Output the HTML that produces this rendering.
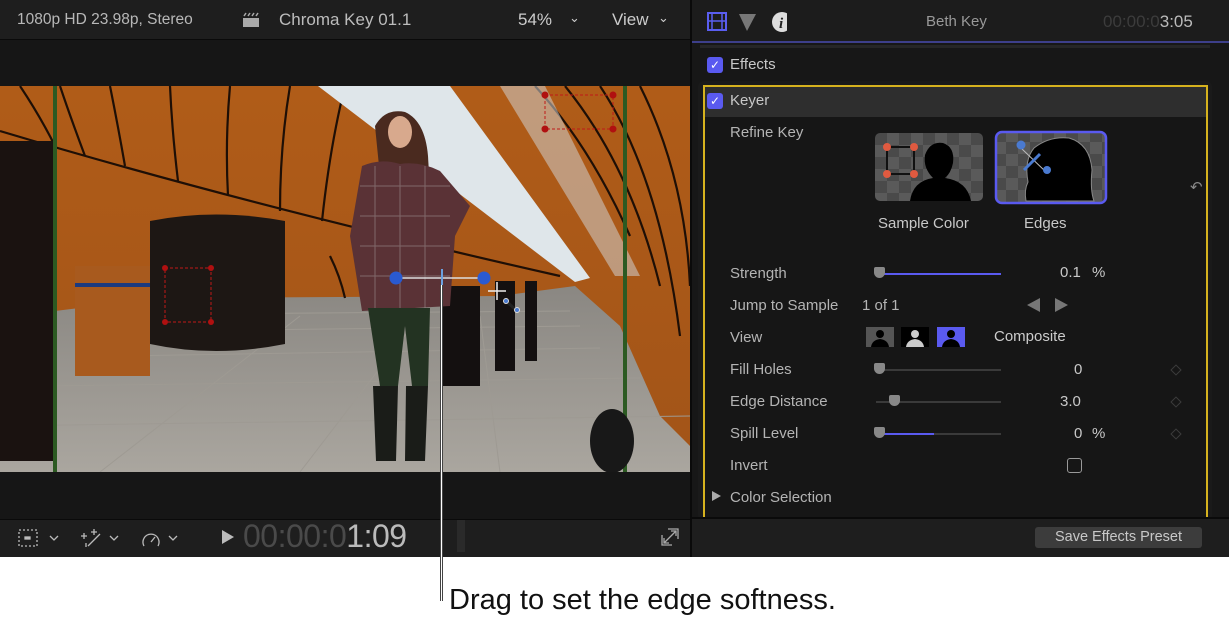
<!DOCTYPE html>
<html><head><meta charset="utf-8"><style>
*{margin:0;padding:0;box-sizing:border-box}
body{width:1229px;height:622px;background:#fff;position:relative;overflow:hidden;font-family:"Liberation Sans",sans-serif}
.a{position:absolute}
.t{position:absolute;color:#c8c8c8;font-size:15px;white-space:nowrap}
.lbl{position:absolute;left:730px;color:#b4b4b4;font-size:15px}
.trk{position:absolute;height:2px;background:#3a3a3a}
.knob{position:absolute;width:11px;height:11px;background:#888;border-radius:2px 2px 6px 6px}
.dia{position:absolute;width:8px;height:8px;border:1px solid #3c3c3c;transform:rotate(45deg)}
</style></head><body>
<div class="a" style="left:0;top:0;width:690px;height:557px;background:#161616"></div>
<div class="a" style="left:0;top:0;width:690px;height:40px;background:#1e1e1e;border-bottom:1px solid #0a0a0a"></div>
<div class="t" style="left:17px;top:11px;font-size:15.5px;color:#b8b8b8">1080p HD 23.98p, Stereo</div>
<svg class="a" style="left:242px;top:12px" width="18" height="16"><rect x="1" y="6" width="16" height="9" fill="#aaa"/><path d="M2 4l2-3M6 4l2-3M10 4l2-3M14 4l2-3" stroke="#aaa" stroke-width="1.5"/></svg>
<div class="t" style="left:279px;top:10px;font-size:17px;color:#bcbcbc">Chroma Key 01.1</div>
<div class="t" style="left:518px;top:10px;font-size:17px;color:#ccc">54%</div>
<div class="t" style="left:569px;top:10px;font-size:13px;color:#ccc">⌄</div>
<div class="t" style="left:612px;top:10px;font-size:17px;color:#ccc">View</div>
<div class="t" style="left:658px;top:10px;font-size:13px;color:#ccc">⌄</div>
<svg class="a" style="left:0;top:86px" width="690" height="386" viewBox="0 0 690 386">
<defs>
<linearGradient id="ceil" x1="0" y1="0" x2="0" y2="1"><stop offset="0" stop-color="#b05c18"/><stop offset="1" stop-color="#a25418"/></linearGradient>
<linearGradient id="floor" x1="0" y1="0" x2="0" y2="1"><stop offset="0" stop-color="#8a8782"/><stop offset="1" stop-color="#aaa69f"/></linearGradient>
</defs>
<rect width="690" height="386" fill="url(#ceil)"/>
<polygon points="0,300 55,225 160,212 500,210 575,200 620,240 660,330 690,360 690,386 0,386" fill="url(#floor)"/>
<g stroke="#9e9a93" stroke-width="1" fill="none"><path d="M0 340L690 330M40 300L640 292M120 270L600 262M160 245L580 240M200 228L570 225M100 386L300 230M300 386L420 230M500 386L480 230"/></g>
<g stroke="#1e0f06" stroke-width="2.2" fill="none">
<path d="M0 45Q250 120 560 190"/>
<path d="M20 0Q40 30 55 60M60 0Q70 30 85 70M110 0Q118 40 125 80M170 0Q172 45 178 95M230 0Q225 55 228 110M290 0Q280 60 280 125M345 0Q330 60 322 135"/>
<path d="M535 0Q590 60 630 150M565 0Q630 80 660 200M600 0Q660 90 680 250M640 0Q685 90 690 200"/>
<path d="M160 150Q180 170 190 210M210 165Q225 185 230 212M330 170Q340 190 345 212"/>
</g>
<polygon points="318,0 450,0 590,192 575,196" fill="#dfe6ea"/>
<polygon points="500,0 545,0 640,190 615,190" fill="#cfcfcf" opacity=".55"/>
<rect x="0" y="55" width="55" height="320" fill="#1a1210"/>
<path d="M150 135Q215 122 285 135L285 258Q215 272 150 258Z" fill="#1d1714"/>
<rect x="75" y="180" width="75" height="110" fill="#a85a1e"/>
<rect x="75" y="197" width="75" height="4" fill="#1a3a80"/>
<g fill="#141010"><rect x="440" y="200" width="40" height="100"/><rect x="495" y="195" width="20" height="90"/><rect x="525" y="195" width="12" height="80"/></g>
<path d="M55 0L55 386M625 0L625 386" stroke="#2c5a22" stroke-width="4"/>
<ellipse cx="612" cy="355" rx="22" ry="32" fill="#181818"/>
<path d="M375 40Q385 22 405 26Q425 35 428 70L432 140L412 160L388 150L380 90Z" fill="#4a2a1f"/>
<ellipse cx="400" cy="46" rx="12" ry="16" fill="#d8a98d"/>
<path d="M362 80Q380 72 400 78Q420 75 440 85L470 120L455 150L450 220L362 225L350 150Z" fill="#5a3236"/>
<g stroke="#9a8c8c" stroke-width="1" opacity=".6"><path d="M360 100H450M360 130H450M360 160H450M360 190H450M375 80V225M400 80V225M425 80V225"/></g>
<path d="M368 222H430L428 300L412 300L405 240L398 300L380 300Z" fill="#233322"/>
<path d="M373 300H398L396 375H376ZM406 300H428L425 375H405Z" fill="#1a1c18"/>
<g stroke="#c01818" stroke-dasharray="3 2" fill="none"><rect x="165" y="182" width="46" height="54"/><rect x="545" y="9" width="68" height="34"/></g>
<g fill="#b01010"><circle cx="165" cy="182" r="3"/><circle cx="211" cy="182" r="3"/><circle cx="165" cy="236" r="3"/><circle cx="211" cy="236" r="3"/><circle cx="545" cy="9" r="3.5"/><circle cx="613" cy="9" r="3.5"/><circle cx="545" cy="43" r="3.5"/><circle cx="613" cy="43" r="3.5"/></g>
<line x1="396" y1="192" x2="484" y2="192" stroke="#ddd" stroke-width="1.5"/>
<circle cx="396" cy="192" r="6.5" fill="#2a5ad0"/><circle cx="484" cy="192" r="6.5" fill="#2a5ad0"/>
<rect x="441" y="183" width="2" height="20" fill="#6aa0e0"/>
<path d="M497 196V214M488 205H506" stroke="#eee" stroke-width="1.5"/>
<path d="M506 215L516 224" stroke="#222" stroke-width="3"/><circle cx="506" cy="215" r="2.5" fill="#4a7ad0" stroke="#ddd"/><circle cx="517" cy="224" r="2.5" fill="#4a7ad0" stroke="#ddd"/>
</svg>
<div class="a" style="left:0;top:519px;width:690px;height:38px;background:#1e1e1e;border-top:1px solid #0a0a0a"></div>
<svg class="a" style="left:18px;top:527px" width="170" height="22" fill="none" stroke="#bbb" stroke-width="1.3">
<rect x="1" y="3" width="18" height="16" stroke-dasharray="2 2"/><rect x="7" y="10" width="5" height="2" fill="#bbb"/><path d="M32 9l4 4 4-4"/>
<path d="M70 19L82 7M66 6v6M63 9h6M76 2v6M73 5h6M68 16v4"/><path d="M92 9l4 4 4-4"/>
<path d="M126 19a8 8 0 1 1 14 0M133 15l4-5"/><path d="M151 9l4 4 4-4"/></svg>
<div class="a" style="left:222px;top:530px;width:0;height:0;border-left:12px solid #bbb;border-top:7px solid transparent;border-bottom:7px solid transparent"></div>
<div class="t" style="left:243px;top:518px;font-size:32px;color:#4a4a4a;letter-spacing:-0.5px">00:00:0<span style="color:#bbb">1:09</span></div>
<div class="a" style="left:457px;top:520px;width:8px;height:32px;background:#2a2a2a"></div>
<svg class="a" style="left:660px;top:527px" width="20" height="20" fill="none" stroke="#aaa" stroke-width="1.3"><path d="M2 8V18H12M8 2H18V12M4 16L16 4M11 4H16V9M4 11V16H9"/></svg>
<div class="a" style="left:440px;top:285px;width:3px;height:316px;background:#fff;border-left:1px solid #444;border-right:1px solid #444"></div>
<div class="t" style="left:449px;top:584px;font-size:29px;color:#111">Drag to set the edge softness.</div>
<div class="a" style="left:690px;top:0;width:2px;height:557px;background:#0a0a0a"></div>
<div class="a" style="left:692px;top:0;width:537px;height:557px;background:#171717"></div>
<div class="a" style="left:692px;top:0;width:537px;height:42px;background:#1c1c1c"></div>
<div class="a" style="left:692px;top:41px;width:537px;height:2px;background:#3d3f8a"></div>
<div class="a" style="left:700px;top:45px;width:510px;height:3px;background:#262626"></div>
<svg class="a" style="left:707px;top:11px" width="80" height="22"><rect x="1" y="2" width="18" height="17" fill="none" stroke="#5a5ef0" stroke-width="2"/><path d="M5 2v17M15 2v17M1 10h18" stroke="#5a5ef0" stroke-width="1.5"/><polygon points="32,3 49,3 40,20" fill="#777"/><circle cx="75" cy="11" r="10" fill="#ddd"/><text x="72" y="17" font-size="15" font-style="italic" font-weight="bold" fill="#222" font-family="Liberation Serif">i</text></svg>
<div class="t" style="left:926px;top:13px;font-size:15px;color:#999">Beth Key</div>
<div class="t" style="left:1103px;top:12px;font-size:17px;color:#3c3c3c">00:00:0<span style="color:#bbb">3:05</span></div>
<div class="a" style="left:707px;top:57px;width:16px;height:16px;background:#5a5af0;border-radius:3px;color:#fff;font-size:12px;text-align:center;line-height:16px">✓</div>
<div class="t" style="left:730px;top:56px;color:#c8c8c8">Effects</div>
<div class="a" style="left:698px;top:81px;width:514px;height:440px;background:#1a1a1a;border-radius:6px"></div>
<div class="a" style="left:703px;top:85px;width:505px;height:436px;border:2px solid #d6b21e;border-bottom:none;background:#161616"></div>
<div class="a" style="left:705px;top:87px;width:501px;height:30px;background:#2e2e2e"></div>
<div class="a" style="left:707px;top:93px;width:16px;height:16px;background:#5a5af0;border-radius:3px;color:#fff;font-size:12px;text-align:center;line-height:16px">✓</div>
<div class="t" style="left:730px;top:92px;color:#c8c8c8">Keyer</div>
<div class="lbl" style="top:124px">Refine Key</div>
<svg class="a" style="left:875px;top:133px" width="110" height="70"><defs><pattern id="ck" width="24" height="24" patternUnits="userSpaceOnUse"><rect width="24" height="24" fill="#5a5a5a"/><rect width="12" height="12" fill="#4a4a4a"/><rect x="12" y="12" width="12" height="12" fill="#4a4a4a"/></pattern></defs><rect width="108" height="68" rx="5" fill="url(#ck)"/><path d="M35 68Q38 48 58 45Q48 35 50 22Q55 8 68 10Q80 14 78 30Q76 40 70 45Q92 48 96 68Z" fill="#000"/><rect x="12" y="14" width="27" height="27" fill="none" stroke="#111" stroke-width="2"/><g fill="#e05a40"><circle cx="12" cy="14" r="4"/><circle cx="39" cy="14" r="4"/><circle cx="12" cy="41" r="4"/><circle cx="39" cy="41" r="4"/></g></svg>
<svg class="a" style="left:994px;top:130px" width="116" height="76"><rect x="2" y="2" width="110" height="71" rx="6" fill="url(#ck)" stroke="#5a5af0" stroke-width="2.5"/><path d="M32 71Q30 60 34 52Q30 30 40 18Q55 6 75 8Q96 14 98 40Q96 60 100 71Z" fill="#000" stroke="#888"/><path d="M27 18L52 42" stroke="#bbb"/><path d="M30 40L46 24" stroke="#4a7ad0" stroke-width="3"/><circle cx="27" cy="15" r="4.5" fill="#4a7ad0"/><circle cx="53" cy="40" r="4" fill="#4a7ad0"/></svg>
<div class="t" style="left:878px;top:215px;color:#c8c8c8">Sample Color</div>
<div class="t" style="left:1024px;top:215px;color:#c8c8c8">Edges</div>
<div class="t" style="left:1190px;top:178px;color:#888;font-size:15px">↶</div>
<div class="lbl" style="top:265px">Strength</div>
<div class="trk" style="left:880px;top:273px;width:121px;background:#5a5af0"></div><div class="knob" style="left:874px;top:267px"></div>
<div class="t" style="left:1060px;top:264px">0.1</div><div class="t" style="left:1092px;top:264px">%</div>
<div class="lbl" style="top:297px">Jump to Sample</div>
<div class="t" style="left:862px;top:297px;color:#b4b4b4">1 of 1</div>
<div class="a" style="left:1027px;top:298px;border-right:13px solid #777;border-top:7px solid transparent;border-bottom:7px solid transparent"></div>
<div class="a" style="left:1055px;top:298px;border-left:13px solid #777;border-top:7px solid transparent;border-bottom:7px solid transparent"></div>
<div class="lbl" style="top:329px">View</div>
<svg class="a" style="left:866px;top:327px" width="104" height="21"><rect width="28" height="20" fill="#555"/><rect x="35" width="28" height="20" fill="#000"/><rect x="71" width="28" height="20" fill="#5a5af0"/><g fill="#000"><circle cx="14" cy="7" r="4"/><path d="M5 20Q6 13 14 12Q22 13 23 20Z"/><circle cx="85" cy="7" r="4"/><path d="M76 20Q77 13 85 12Q93 13 94 20Z"/></g><g fill="#ccc"><circle cx="49" cy="7" r="4"/><path d="M40 20Q41 13 49 12Q57 13 58 20Z"/></g></svg>
<div class="t" style="left:994px;top:328px;color:#ccc">Composite</div>
<div class="lbl" style="top:361px">Fill Holes</div>
<div class="trk" style="left:880px;top:369px;width:121px"></div><div class="knob" style="left:874px;top:363px"></div>
<div class="t" style="left:1074px;top:361px">0</div><div class="dia" style="left:1172px;top:366px"></div>
<div class="lbl" style="top:393px">Edge Distance</div>
<div class="trk" style="left:876px;top:401px;width:125px"></div><div class="knob" style="left:889px;top:395px"></div>
<div class="t" style="left:1060px;top:393px">3.0</div><div class="dia" style="left:1172px;top:398px"></div>
<div class="lbl" style="top:425px">Spill Level</div>
<div class="trk" style="left:880px;top:433px;width:121px"></div><div class="trk" style="left:880px;top:433px;width:54px;background:#5a5af0"></div><div class="knob" style="left:874px;top:427px"></div>
<div class="t" style="left:1074px;top:425px">0</div><div class="t" style="left:1092px;top:425px">%</div><div class="dia" style="left:1172px;top:430px"></div>
<div class="lbl" style="top:457px">Invert</div>
<div class="a" style="left:1067px;top:458px;width:15px;height:15px;border:1.5px solid #999;border-radius:3px"></div>
<div class="a" style="left:712px;top:491px;border-left:9px solid #aaa;border-top:5px solid transparent;border-bottom:5px solid transparent"></div>
<div class="lbl" style="top:489px">Color Selection</div>
<div class="a" style="left:692px;top:517px;width:537px;height:40px;background:#1e1e1e;border-top:2px solid #0a0a0a"></div>
<div class="a" style="left:1035px;top:527px;width:167px;height:21px;background:#3c3c3c;border-radius:3px;color:#c8c8c8;font-size:14.5px;text-align:center;line-height:21px">Save Effects Preset</div>
</body></html>
